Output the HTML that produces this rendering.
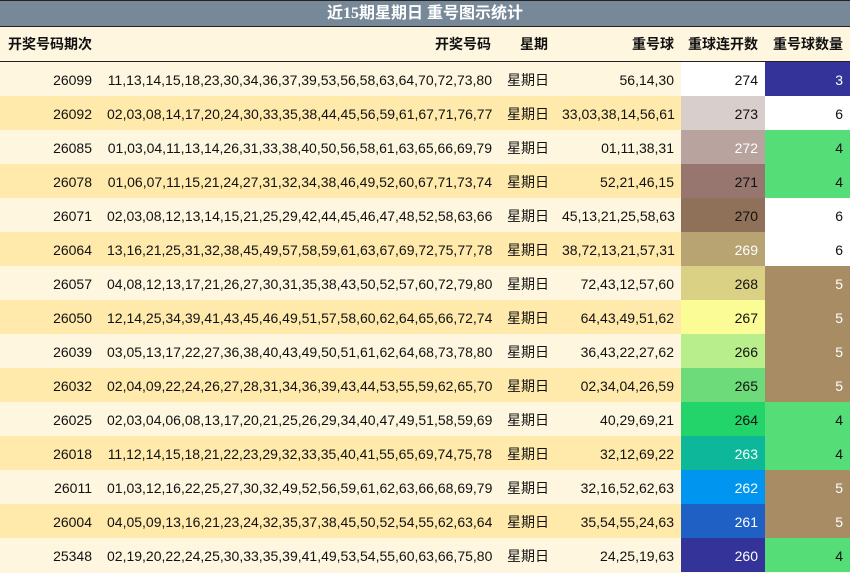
<!DOCTYPE html><html><head><meta charset="utf-8"><style>
body{margin:0;width:850px;height:573px;overflow:hidden;font-family:"Liberation Sans","Noto Sans CJK SC",sans-serif;background:#fef6df}
.t{height:25px;background:#778899;border-top:1px solid #222;border-bottom:1px solid #222;color:#fff;font-weight:bold;font-size:16px;text-align:center;line-height:26px;font-family:"Liberation Serif","Noto Sans CJK SC",sans-serif;box-sizing:content-box}
table{border-collapse:collapse;width:850px;table-layout:fixed;font-size:14px;color:#111}
th{height:34px;font-weight:bold;border-bottom:1px solid #222;padding:0 7px 0 7px;text-align:right;font-size:14px}
td{height:34px;padding:2px 7px 0;text-align:right;white-space:nowrap;overflow:hidden;box-sizing:border-box}
td:nth-child(1),td:nth-child(2){padding-right:8px}
td:nth-child(3){padding-right:8px}
tr.o{background:#fef6df}tr.e{background:#ffeaab}
.w{color:#fff}
</style></head><body>
<div class="t">近15期星期日 重号图示统计</div>
<table>
<colgroup><col style="width:100px"><col style="width:400px"><col style="width:55px"><col style="width:126px"><col style="width:84px"><col style="width:85px"></colgroup>
<tr><th style="text-align:left;padding-left:8px">开奖号码期次</th><th style="padding-right:9px">开奖号码</th><th>星期</th><th>重号球</th><th>重球连开数</th><th>重号球数量</th></tr>
<tr class="o"><td>26099</td><td>11,13,14,15,18,23,30,34,36,37,39,53,56,58,63,64,70,72,73,80</td><td>星期日</td><td>56,14,30</td><td style="background:#fff">274</td><td class="w" style="background:#333399">3</td></tr>
<tr class="e"><td>26092</td><td>02,03,08,14,17,20,24,30,33,35,38,44,45,56,59,61,67,71,76,77</td><td>星期日</td><td>33,03,38,14,56,61</td><td style="background:#d8cfcc">273</td><td style="background:#fff">6</td></tr>
<tr class="o"><td>26085</td><td>01,03,04,11,13,14,26,31,33,38,40,50,56,58,61,63,65,66,69,79</td><td>星期日</td><td>01,11,38,31</td><td class="w" style="background:#b8a39e">272</td><td style="background:#55dd77">4</td></tr>
<tr class="e"><td>26078</td><td>01,06,07,11,15,21,24,27,31,32,34,38,46,49,52,60,67,71,73,74</td><td>星期日</td><td>52,21,46,15</td><td style="background:#96766e">271</td><td style="background:#55dd77">4</td></tr>
<tr class="o"><td>26071</td><td>02,03,08,12,13,14,15,21,25,29,42,44,45,46,47,48,52,58,63,66</td><td>星期日</td><td>45,13,21,25,58,63</td><td style="background:#8f7058">270</td><td style="background:#fff">6</td></tr>
<tr class="e"><td>26064</td><td>13,16,21,25,31,32,38,45,49,57,58,59,61,63,67,69,72,75,77,78</td><td>星期日</td><td>38,72,13,21,57,31</td><td class="w" style="background:#b8a472">269</td><td style="background:#fff">6</td></tr>
<tr class="o"><td>26057</td><td>04,08,12,13,17,21,26,27,30,31,35,38,43,50,52,57,60,72,79,80</td><td>星期日</td><td>72,43,12,57,60</td><td style="background:#dbd184">268</td><td class="w" style="background:#a88c64">5</td></tr>
<tr class="e"><td>26050</td><td>12,14,25,34,39,41,43,45,46,49,51,57,58,60,62,64,65,66,72,74</td><td>星期日</td><td>64,43,49,51,62</td><td style="background:#fcfc96">267</td><td class="w" style="background:#a88c64">5</td></tr>
<tr class="o"><td>26039</td><td>03,05,13,17,22,27,36,38,40,43,49,50,51,61,62,64,68,73,78,80</td><td>星期日</td><td>36,43,22,27,62</td><td style="background:#b8ee8c">266</td><td class="w" style="background:#a88c64">5</td></tr>
<tr class="e"><td>26032</td><td>02,04,09,22,24,26,27,28,31,34,36,39,43,44,53,55,59,62,65,70</td><td>星期日</td><td>02,34,04,26,59</td><td style="background:#6ddb79">265</td><td class="w" style="background:#a88c64">5</td></tr>
<tr class="o"><td>26025</td><td>02,03,04,06,08,13,17,20,21,25,26,29,34,40,47,49,51,58,59,69</td><td>星期日</td><td>40,29,69,21</td><td style="background:#22d46a">264</td><td style="background:#55dd77">4</td></tr>
<tr class="e"><td>26018</td><td>11,12,14,15,18,21,22,23,29,32,33,35,40,41,55,65,69,74,75,78</td><td>星期日</td><td>32,12,69,22</td><td class="w" style="background:#0db89a">263</td><td style="background:#55dd77">4</td></tr>
<tr class="o"><td>26011</td><td>01,03,12,16,22,25,27,30,32,49,52,56,59,61,62,63,66,68,69,79</td><td>星期日</td><td>32,16,52,62,63</td><td class="w" style="background:#0096f0">262</td><td class="w" style="background:#a88c64">5</td></tr>
<tr class="e"><td>26004</td><td>04,05,09,13,16,21,23,24,32,35,37,38,45,50,52,54,55,62,63,64</td><td>星期日</td><td>35,54,55,24,63</td><td class="w" style="background:#1e60c4">261</td><td class="w" style="background:#a88c64">5</td></tr>
<tr class="o"><td>25348</td><td>02,19,20,22,24,25,30,33,35,39,41,49,53,54,55,60,63,66,75,80</td><td>星期日</td><td>24,25,19,63</td><td class="w" style="background:#333399">260</td><td style="background:#55dd77">4</td></tr>
</table></body></html>
